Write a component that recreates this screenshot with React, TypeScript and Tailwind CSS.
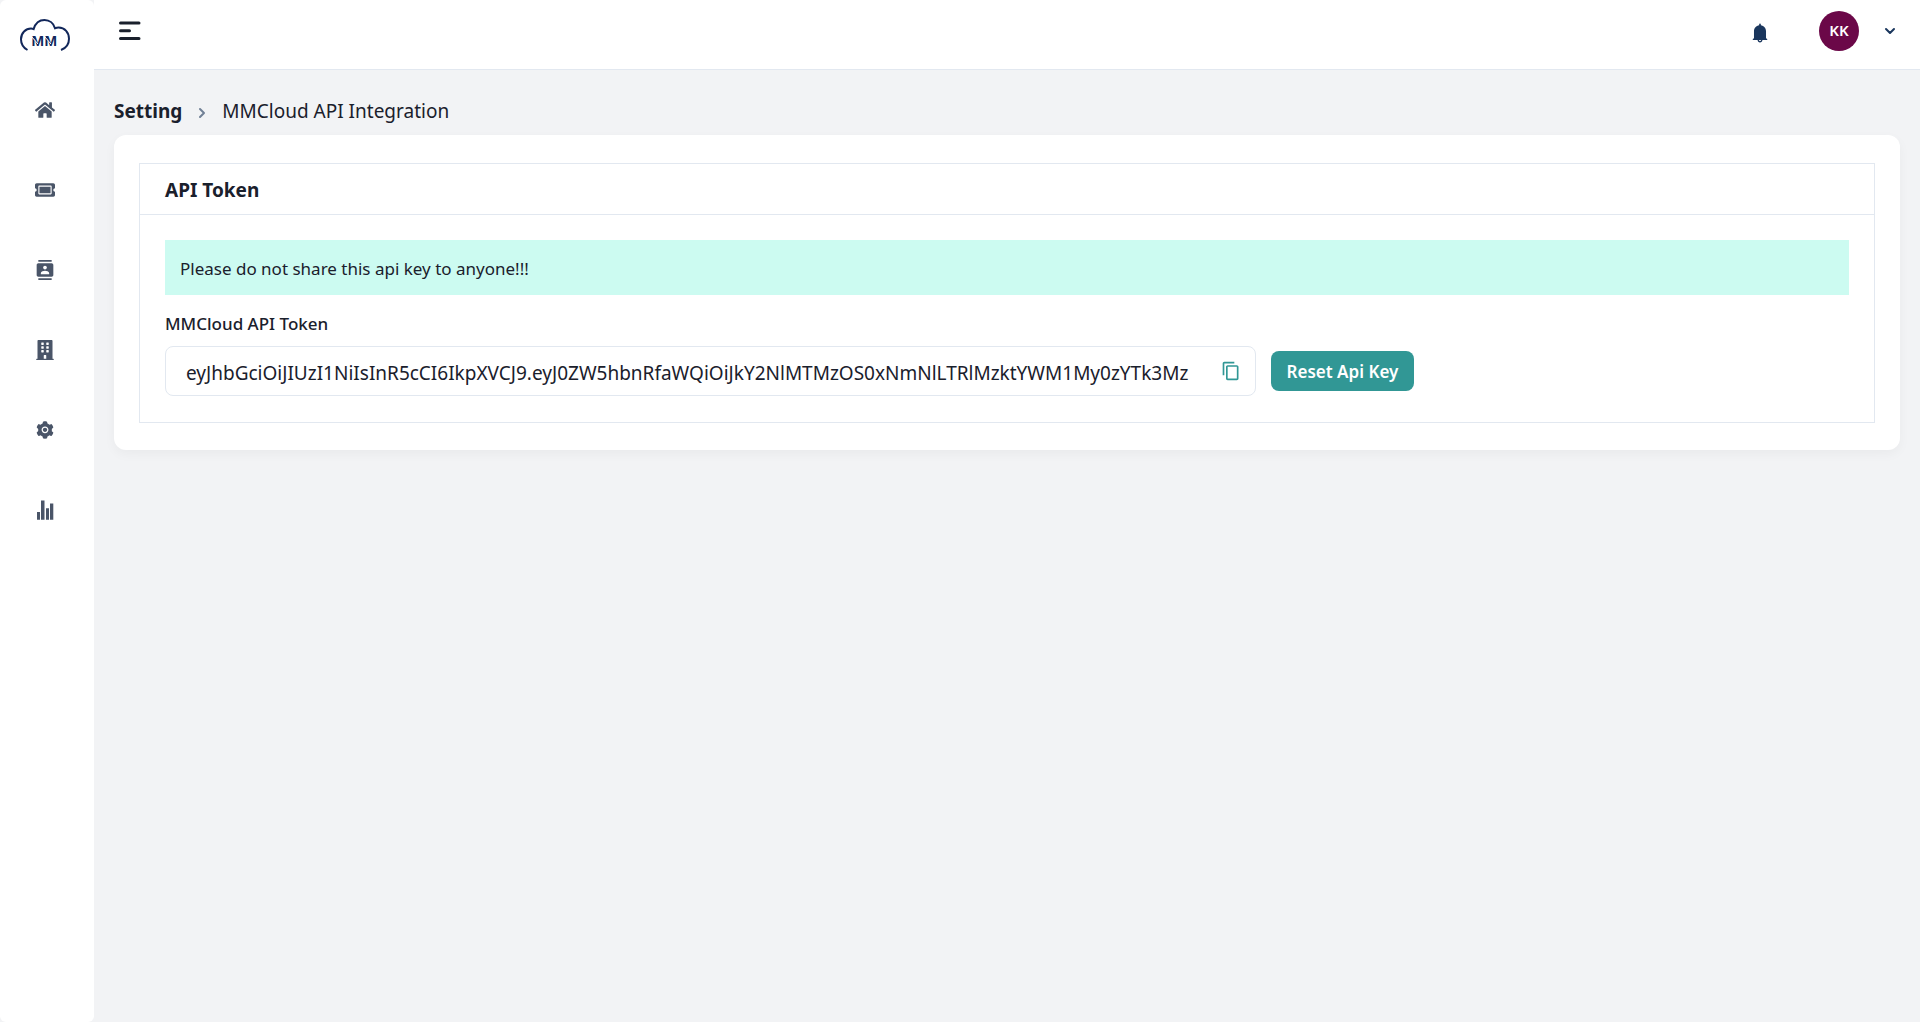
import { useState } from 'react';
import { FaHome, FaTicketAlt, FaBuilding } from 'react-icons/fa';
import { MdContacts, MdContentCopy } from 'react-icons/md';
import { AiFillSetting, AiFillBell } from 'react-icons/ai';
import { FiChevronDown, FiChevronRight } from 'react-icons/fi';

function StatsIcon({ size = 20 }: { size?: number }) {
  return (
    <svg width={size} height={size} viewBox="0 0 20 20" fill="currentColor" aria-hidden="true">
      <path d="M2 12h3v7.700H2zM6 .5h3.500v19.200H6zM11 8.200h3v11.500h-3zM15 3.500h3.300v16.200H15z" />
    </svg>
  );
}

const NAV_ITEMS = [
  { id: 'home', label: 'Home', icon: FaHome },
  { id: 'tickets', label: 'Tickets', icon: FaTicketAlt },
  { id: 'contacts', label: 'Contacts', icon: MdContacts },
  { id: 'company', label: 'Company', icon: FaBuilding },
  { id: 'settings', label: 'Settings', icon: AiFillSetting },
  { id: 'reports', label: 'Reports', icon: StatsIcon },
];

const API_TOKEN =
  'eyJhbGciOiJIUzI1NiIsInR5cCI6IkpXVCJ9.eyJ0ZW5hbnRfaWQiOiJkY2NlMTMzOS0xNmNlLTRlMzktYWM1My0zYTk3Mz';

function Logo() {
  return (
    <svg width="50" height="33" viewBox="0 0 50 33" fill="none" aria-hidden="true">
      <path
        d="M7.5 32C3.6 29.8 1 26 1 21.2C1 15 5.8 10.600 11 10.600C12 10.600 12.800 10.800 13.600 11.100C15.200 5.800 19.200 2 24.500 2C29.600 2 33.600 5.400 35 10.200C36.200 9.800 37.400 9.600 38.600 9.600C44.800 9.600 49 14.600 49 20.800C49 26 46 30.200 41 32"
        stroke="#12275a"
        strokeWidth="2"
      />
      <g fill="#12275a" fontFamily="Liberation Sans, sans-serif" fontWeight="700" fontSize="15">
        <text x="11.500" y="27.500">M</text>
        <text x="24.500" y="27.500">M</text>
      </g>
      <path d="M11.500 18.500L18 26M24.500 18.500L31 26" stroke="#fff" strokeWidth="1" />
    </svg>
  );
}

function Sidebar() {
  return (
    <aside className="w-[94px] shrink-0 rounded-md bg-white pr-1">
      <a href="#" aria-label="MMCloud" className="flex justify-center pt-[18px]">
        <Logo />
      </a>
      <nav className="mt-[39px] flex flex-col items-center gap-10">
        {NAV_ITEMS.map((item) => (
          <a
            key={item.id}
            href="#"
            aria-label={item.label}
            className="flex size-10 items-center justify-center text-[#4a5568]"
          >
            <item.icon size={20} />
          </a>
        ))}
      </nav>
    </aside>
  );
}

function TopBar() {
  return (
    <header className="flex h-[70px] items-center justify-between border-b border-[#e2e8f0] bg-white pr-[22px] pb-2 pl-6">
      <button aria-label="Toggle menu" className="text-[#1a202c]">
        <svg width="24" height="22" viewBox="0 0 24 22" stroke="currentColor" strokeWidth="3" strokeLinecap="round">
          <path d="M2.500 3H21M2.500 10.700H11.500M2.500 18.500H21" />
        </svg>
      </button>
      <div className="flex items-center text-[#1a365d]">
        <button aria-label="Notifications" className="mr-12 pt-1">
          <AiFillBell size={22} />
        </button>
        <button aria-label="Account" className="flex items-center gap-[23px]">
          <span className="flex size-10 items-center justify-center rounded-full bg-[#6b0848] text-[15px] font-semibold text-white">
            KK
          </span>
          <FiChevronDown size={16} strokeWidth={3} />
        </button>
      </div>
    </header>
  );
}

export default function App() {
  const [token] = useState(API_TOKEN);

  return (
    <div className="flex min-h-screen bg-[#f2f3f5] font-['Noto_Sans',sans-serif] text-[#1a202c]">
      <Sidebar />
      <div className="min-w-0 flex-1">
        <TopBar />
        <main className="px-5 pt-[26px]">
          <nav aria-label="Breadcrumb" className="flex items-center text-[19px] leading-[30px]">
            <a href="#" className="font-bold">Setting</a>
            <FiChevronRight size={16} strokeWidth={3} className="mx-3 mt-1 text-[#718096]" />
            <span>MMCloud API Integration</span>
          </nav>

          <div className="mt-[9px] rounded-xl bg-white px-[25px] pt-7 pb-[27px] shadow-[0_4px_12px_rgba(0,0,0,0.04)]">
            <section className="border border-[#e2e8f0]">
              <h2 className="border-b border-[#e2e8f0] px-[25px] pt-[11px] pb-[9px] text-[19px] leading-[30px] font-bold">
                API Token
              </h2>
              <div className="px-[25px] pt-[25px] pb-[26px]">
                <p className="bg-[#ccfbf1] px-[15px] pt-[15px] pb-[13px] text-[17px] leading-[27px]">
                  Please do not share this api key to anyone!!!
                </p>
                <label htmlFor="api-token" className="mt-[15px] block text-[17px] leading-[27px] font-medium">
                  MMCloud API Token
                </label>
                <div className="mt-[9px] flex items-center gap-[15px]">
                  <div className="flex h-[50px] w-[calc(65%-4px)] items-center rounded-lg border border-[#e2e8f0] pr-[14px] pl-5">
                    <input
                      id="api-token"
                      readOnly
                      value={token}
                      className="h-full min-w-0 flex-1 bg-transparent pt-[3px] text-[19px] outline-none"
                    />
                    <button
                      aria-label="Copy token"
                      onClick={() => navigator.clipboard?.writeText(token)}
                      className="ml-[26px] text-[#319795]"
                    >
                      <MdContentCopy size={20} />
                    </button>
                  </div>
                  <button className="h-10 rounded-lg bg-[#319795] px-4 pt-[2px] text-[17px] font-semibold whitespace-nowrap text-white">
                    Reset Api Key
                  </button>
                </div>
              </div>
            </section>
          </div>
        </main>
      </div>
    </div>
  );
}
